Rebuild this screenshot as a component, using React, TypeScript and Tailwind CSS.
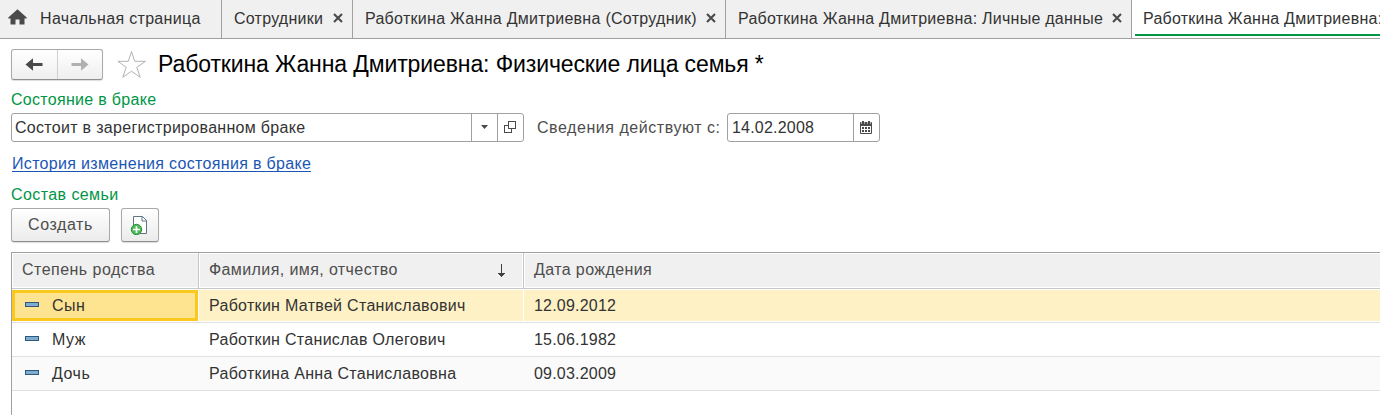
import React from 'react';

const tabs = [
  { label: 'Сотрудники', width: 'w-[131px]', tracking: 'tracking-[0.25px]' },
  { label: 'Работкина Жанна Дмитриевна (Сотрудник)', width: 'w-[373px]', tracking: 'tracking-[0.29px]' },
  { label: 'Работкина Жанна Дмитриевна: Личные данные', width: 'w-[406px]', tracking: 'tracking-[0.25px]' },
];

const rows = [
  { kin: 'Сын', name: 'Работкин Матвей Станиславович', date: '12.09.2012' },
  { kin: 'Муж', name: 'Работкин Станислав Олегович', date: '15.06.1982' },
  { kin: 'Дочь', name: 'Работкина Анна Станиславовна', date: '09.03.2009' },
];

function CloseIcon() {
  return (
    <svg className="-mt-[2px] shrink-0" width="10" height="10" viewBox="0 0 10 10">
      <path d="M1 1l8 8M9 1l-8 8" stroke="#4a4a4a" strokeWidth="2.1" fill="none" />
    </svg>
  );
}

function HomeIcon() {
  return (
    <svg className="-mt-[4px] ml-[8px] shrink-0" width="19" height="16" viewBox="0 0 19 16">
      <path d="M9.500 0.300L0.300 8.500V9.500H2.500V15.500H7.500V10.500H11.500V15.500H16.500V9.500H18.700V8.500Z" fill="#4a4a4a" />
    </svg>
  );
}

function ArrowIcon({ flip = false }: { flip?: boolean }) {
  return (
    <svg className={flip ? '-scale-x-100' : 'mr-px'} width="18" height="14" viewBox="0 0 18 14">
      <path d="M0.500 7.500L8 1.300V6H17.500V9H8V13.700Z" fill={flip ? '#b0b0b0' : '#4a4a4a'} />
    </svg>
  );
}

function StarIcon() {
  return (
    <svg className="ml-[14px] shrink-0" width="30" height="29" viewBox="0 0 30 29">
      <path
        d="M14.500 1.500L17.700 11.300H28.500L19.800 17.300L23.200 27.300L14.500 21.200L5.800 27.300L9.200 17.300L0.900 11.300H11.300Z"
        fill="#fff"
        stroke="#b3b3b3"
        strokeWidth="1"
      />
    </svg>
  );
}

function CalendarIcon() {
  return (
    <svg className="mr-px" width="12" height="13" viewBox="0 0 12 13">
      <rect x="0" y="1" width="12" height="12" rx="1" fill="#4a4a4a" />
      <path d="M1 5h10v7H1z" fill="#fff" />
      <path d="M2 0h2v1H2zM8 0h2v1H8z" fill="#4a4a4a" />
      <path d="M2 6h2v2H2zM5 6h2v2H5zM8 6h2v2H8zM2 9h2v2H2zM5 9h2v2H5zM8 9h2v2H8z" fill="#4a4a4a" />
      <path d="M1 1h1v2H1zM4 1h1v2H4zM7 1h1v2H7zM10 1h1v2h-1z" fill="#aaa" />
    </svg>
  );
}

function OpenIcon() {
  return (
    <svg className="-mt-px mr-px" width="12" height="12" viewBox="0 0 12 12" fill="none" stroke="#4a4a4a" shapeRendering="crispEdges">
      <path d="M4.500 0.500h7v7h-7zM4.500 4.500h-4v7h7v-4" />
    </svg>
  );
}

function CopyIcon() {
  return (
    <svg className="mr-[2px]" width="18" height="20" viewBox="0 0 18 20">
      <path d="M3.500 10V1.500H12.500L16.500 5.500V18.500H10" fill="#fff" stroke="#5f7585" />
      <path d="M12 1.500V6H16.500" fill="none" stroke="#5f7585" />
      <circle cx="6.500" cy="14.500" r="5.200" fill="#4dbb55" stroke="#24913a" />
      <path d="M3 14.500h7M6.500 11v7" stroke="#fff" strokeWidth="1.700" />
    </svg>
  );
}

export default function App() {
  return (
    <div className="h-[415px] w-[1380px] overflow-hidden bg-white font-['Liberation_Sans',Arial,sans-serif] text-[16px] leading-[18px] tracking-[0.3px] whitespace-nowrap text-[#333]">
      <nav className="flex h-[39px] border-b border-[#a0a0a0] bg-[#f0f0f0]">
        <div className="flex w-[222px] shrink-0 items-center border-r border-[#a0a0a0]">
          <HomeIcon />
          <span className="ml-[13px] tracking-[0.33px]">Начальная страница</span>
        </div>
        {tabs.map((t) => (
          <div key={t.label} className={`flex shrink-0 items-center justify-between border-r border-[#a0a0a0] pr-[9px] pl-[12px] ${t.width}`}>
            <span className={t.tracking}>{t.label}</span>
            <CloseIcon />
          </div>
        ))}
        <div className="flex grow flex-col overflow-hidden bg-white pt-[10px] pl-[3px]">
          <span className="ml-[8px] h-[24px] tracking-[0.25px]">Работкина Жанна Дмитриевна:</span>
          <div className="h-[2px] w-full shrink-0 bg-[#009646]" />
        </div>
      </nav>

      <header className="flex h-[50px] items-center pl-[11px]">
        <div className="flex h-[31px] w-[92px] rounded-[3px] border border-[#a9a9a9] border-b-[#8f8f8f] bg-linear-to-b from-white to-[#efefef] shadow-[0_1px_1px_#ddd]">
          <div className="flex w-[46px] items-center justify-center border-r border-[#d0d0d0]"><ArrowIcon /></div>
          <div className="flex grow items-center justify-center"><ArrowIcon flip /></div>
        </div>
        <StarIcon />
        <h1 className="ml-[11px] text-[23px] leading-[28px] tracking-[-0.11px] text-black">Работкина Жанна Дмитриевна: Физические лица семья *</h1>
      </header>

      <section className="pl-[11px]">
        <h2 className="h-[24px] pt-[2px] text-[#009646]">Состояние в браке</h2>
        <div className="flex h-[29px] items-stretch">
          <div className="flex w-[513px] rounded-[3px] border border-[#a0a0a0]">
            <div className="flex grow items-center pl-[3px]">Состоит в зарегистрированном браке</div>
            <div className="flex w-[26px] items-center justify-center border-l border-[#a0a0a0]">
              <svg className="-mt-px mr-px" width="7" height="4" viewBox="0 0 7 4"><path d="M0 0h7L3.500 4z" fill="#4a4a4a" /></svg>
            </div>
            <div className="flex w-[26px] items-center justify-center border-l border-[#a0a0a0]"><OpenIcon /></div>
          </div>
          <div className="flex w-[203px] items-center pl-[13px] tracking-[0.55px] text-[#4d4d4d]">Сведения действуют с:</div>
          <div className="flex w-[153px] rounded-[3px] border border-[#a0a0a0]">
            <div className="flex grow items-center pl-[4px] tracking-[0.2px]">14.02.2008</div>
            <div className="flex w-[26px] items-center justify-center border-l border-[#a0a0a0]"><CalendarIcon /></div>
          </div>
        </div>
        <div className="h-[42px] pt-[13px] pl-px">
          <a className="inline-block h-[17px] border-b border-[#1a57b5] tracking-[0.32px] text-[#1a57b5]">История изменения состояния в браке</a>
        </div>
        <h2 className="h-[24px] pt-[2px] tracking-[0.42px] text-[#009646]">Состав семьи</h2>
        <div className="flex h-[44px] items-start gap-[11px]">
          <button className="h-[34px] w-[99px] rounded-[3px] border border-[#a9a9a9] border-b-[#8f8f8f] bg-linear-to-b from-white to-[#ebebeb] tracking-[0.57px] text-[#4d4d4d] shadow-[0_1px_1px_#ddd]">Создать</button>
          <button className="flex h-[34px] w-[38px] items-center justify-center rounded-[3px] border border-[#a9a9a9] border-b-[#8f8f8f] bg-linear-to-b from-white to-[#ebebeb] shadow-[0_1px_1px_#ddd]"><CopyIcon /></button>
        </div>

        <div className="h-[163px] border-t border-l border-[#a0a0a0]">
          <div className="flex h-[36px] border-b border-[#c8c8c8] bg-white text-[#4d4d4d]">
            <div className="flex w-[187px] border-r border-[#c8c8c8] p-px pr-0">
              <div className="flex grow items-center bg-[#f0f0f0] pb-[2px] pl-[9px] tracking-[0.47px]">Степень родства</div>
            </div>
            <div className="flex w-[325px] border-r border-[#c8c8c8] p-px">
              <div className="flex grow items-center justify-between bg-[#f0f0f0] pr-[17px] pb-[2px] pl-[9px] tracking-[0.4px]">
                <span>Фамилия, имя, отчество</span>
                <svg className="mt-[2px]" width="7" height="13" viewBox="0 0 7 13" shapeRendering="crispEdges">
                  <path d="M3 0h1v9h3v1H6v1H5v1H4v1H3v-1H2v-1H1v-1H0V9h3z" fill="#404040" />
                </svg>
              </div>
            </div>
            <div className="flex grow p-px pr-0">
              <div className="flex grow items-center bg-[#f0f0f0] pb-[2px] pl-[9px] tracking-[0.4px]">Дата рождения</div>
            </div>
          </div>
          {rows.map((r, i) => (
            <div key={r.kin} className={`flex h-[34px] border-b border-[#e0e0e0] py-px ${i === 2 ? 'bg-[#fafafa]' : 'bg-white'}`}>
              <div className={`flex w-[186px] items-center ${i === 0 ? 'border-[3px] border-[#fbc91e] bg-[#fee391] pl-[10px]' : 'pl-[13px]'}`}>
                <div className="-mt-[2px] h-[5px] w-[14px] border border-[#2d5878] bg-[#7fadd1]" />
                <span className="ml-[13px] tracking-[0.5px]">{r.kin}</span>
              </div>
              <div className={`ml-px flex w-[324px] items-center pl-[10px] ${i === 0 ? 'bg-[#fef1c5]' : ''}`}>{r.name}</div>
              <div className={`ml-px flex grow items-center pl-[10px] tracking-[0.2px] ${i === 0 ? 'bg-[#fef1c5]' : ''}`}>{r.date}</div>
            </div>
          ))}
        </div>
      </section>
    </div>
  );
}
